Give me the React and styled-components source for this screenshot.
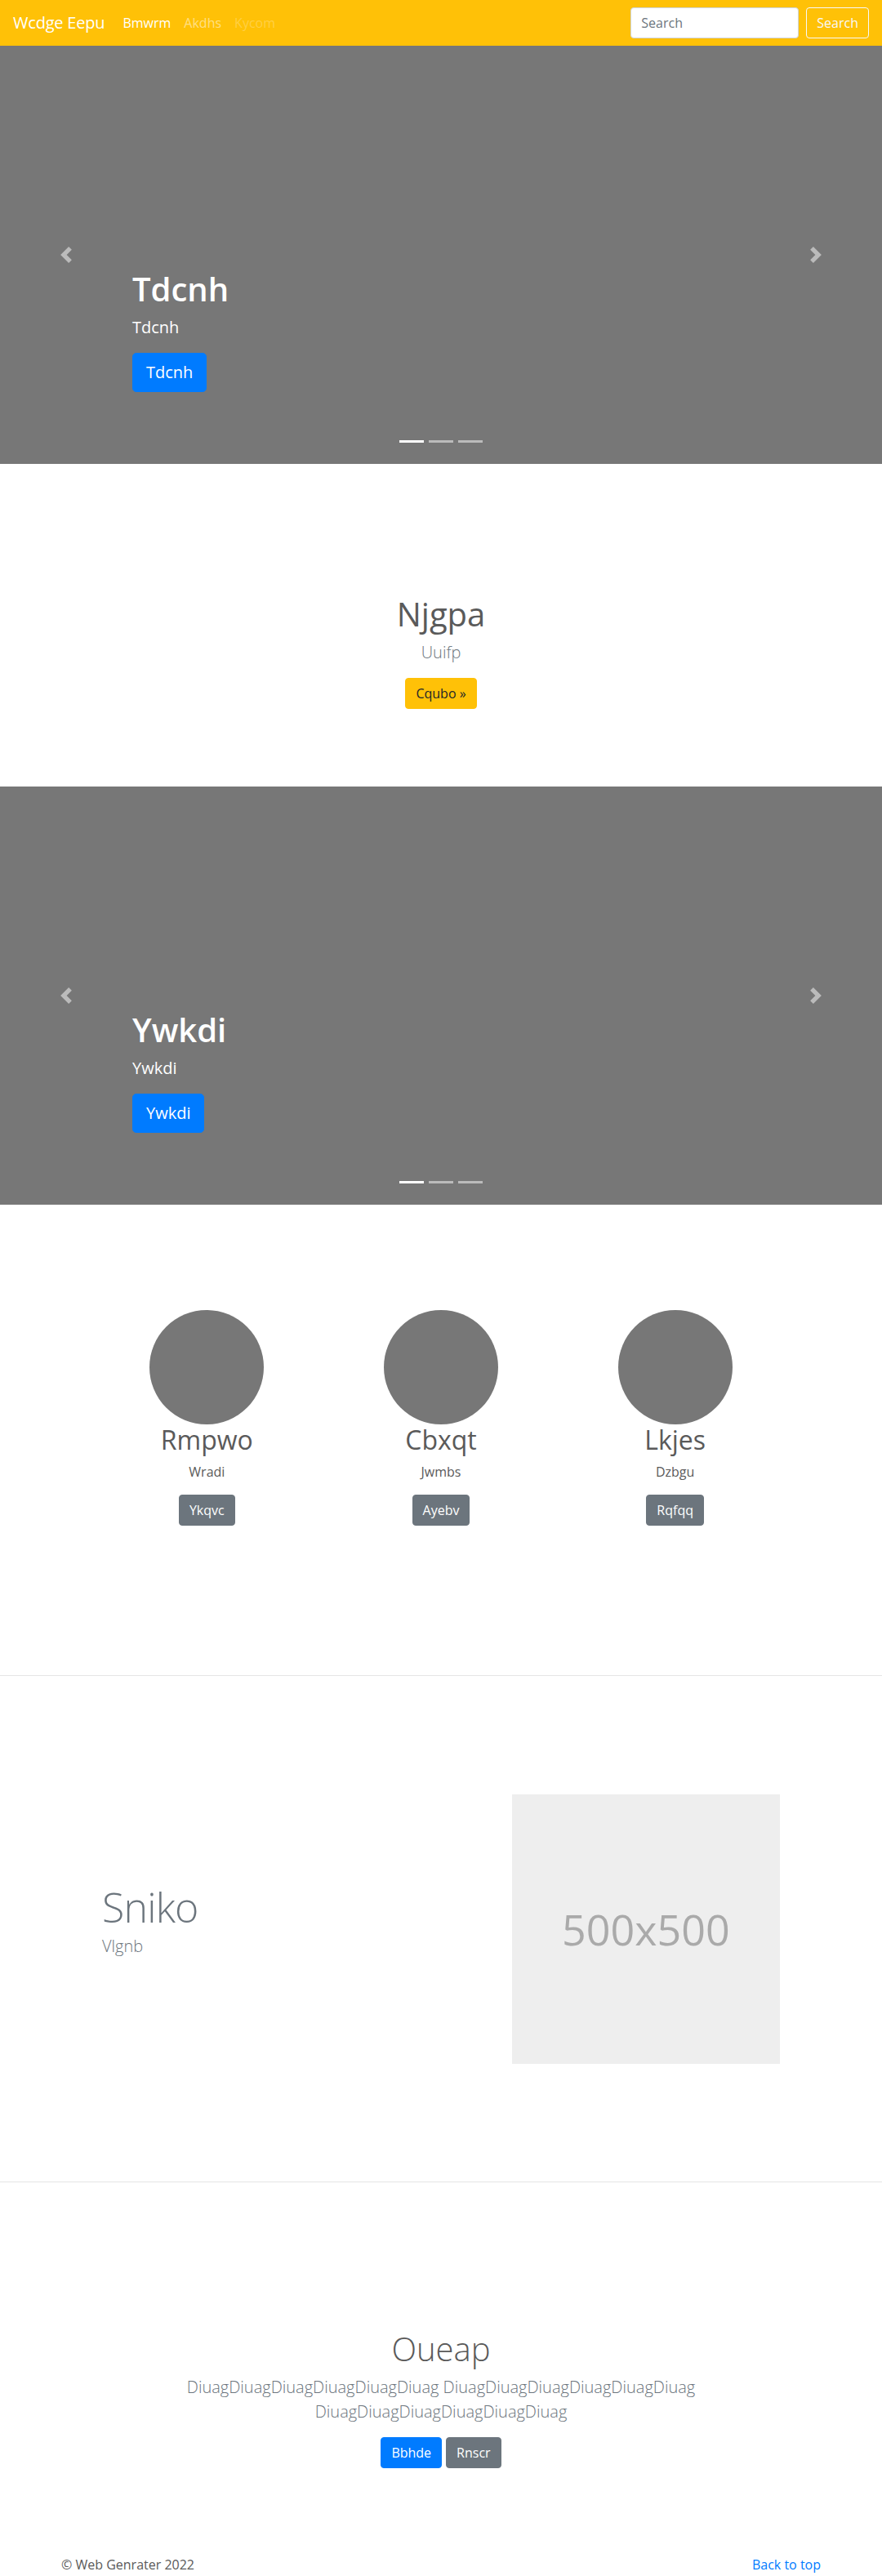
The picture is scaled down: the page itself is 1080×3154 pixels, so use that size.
import React from 'react';
import styled, { createGlobalStyle, css } from 'styled-components';

const GlobalStyle = createGlobalStyle`
  html, body {
    margin: 0;
    padding: 0;
    background: #fff;
  }
  body {
    font-family: "Open Sans", "Noto Sans", sans-serif;
    font-size: 16px;
    line-height: 1.5;
    color: #5a5a5a;
  }
  * {
    box-sizing: border-box;
  }
`;

const Navbar = styled.nav`
  display: flex;
  align-items: center;
  height: 56px;
  padding: 8px 16px;
  background-color: #ffc107;
`;

const Brand = styled.a`
  font-size: 20px;
  line-height: 30px;
  padding: 5px 0;
  margin-right: 14px;
  color: #fff;
  white-space: nowrap;
  letter-spacing: -0.2px;
`;

const NavLinks = styled.div`
  display: flex;
  flex: 1;
`;

const NavLink = styled.a`
  padding: 8px;
  color: ${(p) =>
    p.$state === 'active'
      ? '#fff'
      : p.$state === 'disabled'
      ? 'rgba(255, 255, 255, 0.25)'
      : 'rgba(255, 255, 255, 0.5)'};
`;

const SearchForm = styled.form`
  display: flex;
  align-items: center;
  gap: 9px;
`;

const SearchInput = styled.input`
  width: 206px;
  height: 38px;
  padding: 6px 12px;
  font-family: inherit;
  font-size: 16px;
  color: #495057;
  border: 1px solid #ced4da;
  border-radius: 4px;
  background: #fff;
  &::placeholder {
    color: #6c757d;
  }
`;

const OutlineButton = styled.button`
  height: 38px;
  padding: 6px 12px;
  font-family: inherit;
  font-size: 16px;
  line-height: 1.5;
  color: #f8f9fa;
  background: transparent;
  border: 1px solid #f8f9fa;
  border-radius: 4px;
`;

const variants = {
  primary: css`
    background-color: #007bff;
    border-color: #007bff;
    color: #fff;
  `,
  warning: css`
    background-color: #ffc107;
    border-color: #ffc107;
    color: #212529;
  `,
  secondary: css`
    background-color: #6c757d;
    border-color: #6c757d;
    color: #fff;
  `,
};

const Button = styled.a`
  display: inline-block;
  border: 1px solid transparent;
  line-height: 1.5;
  font-size: ${(p) => (p.$size === 'lg' ? '20px' : '16px')};
  padding: ${(p) => (p.$size === 'lg' ? '8px 16px' : '6px 12px')};
  border-radius: ${(p) => (p.$size === 'lg' ? '4.8px' : '4px')};
  ${(p) => variants[p.$variant || 'primary']}
`;

const CarouselFrame = styled.section`
  position: relative;
  height: 512px;
  background-color: #777;
  display: flex;
  flex-direction: column;
  justify-content: flex-end;
  align-items: flex-start;
  padding: 0 0 88px 15%;
`;

const CaptionTitle = styled.h1`
  margin: 0 0 8px;
  font-size: 40px;
  line-height: 1.2;
  font-weight: 600;
  color: #fff;
`;

const CaptionText = styled.p`
  margin: 0 0 16px;
  font-size: 20px;
  line-height: 30px;
  color: #fff;
`;

const Control = styled.span`
  position: absolute;
  top: 0;
  bottom: 0;
  ${(p) => (p.$side === 'left' ? 'left: 0;' : 'right: 0;')}
  width: 15%;
  display: flex;
  align-items: center;
  justify-content: center;
  opacity: 0.5;
`;

const Indicators = styled.ol`
  position: absolute;
  left: 0;
  right: 0;
  bottom: 26px;
  margin: 0;
  padding: 0;
  list-style: none;
  display: flex;
  justify-content: center;
  gap: 6px;
`;

const Indicator = styled.li`
  width: 30px;
  height: 3px;
  background-color: #fff;
  opacity: ${(p) => (p.$active ? 1 : 0.5)};
`;

const Intro = styled.section`
  padding: 160px 0 95px;
  text-align: center;
`;

const IntroTitle = styled.h1`
  margin: 0 0 8px;
  font-size: 40px;
  line-height: 1.2;
  font-weight: 500;
`;

const Lead = styled.p`
  margin: 0 0 16px;
  font-size: 20px;
  line-height: 30px;
  font-weight: 300;
  color: #6c757d;
`;

const Marketing = styled.section`
  width: 860px;
  margin: 0 auto;
  padding: 129px 0 183px;
  display: grid;
  grid-template-columns: repeat(3, 1fr);
`;

const Member = styled.div`
  display: flex;
  flex-direction: column;
  align-items: center;
  text-align: center;
`;

const Avatar = styled.div`
  width: 140px;
  height: 140px;
  border-radius: 50%;
  background-color: #777;
`;

const MemberName = styled.h2`
  margin: 0 0 8px;
  font-size: 32px;
  line-height: 1.2;
  font-weight: 400;
`;

const MemberText = styled.p`
  margin: 0 0 16px;
`;

const Divider = styled.hr`
  margin: 0;
  border: 0;
  border-top: 1px solid rgba(0, 0, 0, 0.1);
`;

const Featurette = styled.section`
  width: 860px;
  margin: 0 auto;
  padding: 145px 0 144px;
  display: grid;
  grid-template-columns: 7fr 5fr;
  align-items: center;
`;

const FeatureText = styled.div`
  padding: 0 15px;
`;

const FeatureHeading = styled.h2`
  margin: 0 0 8px;
  font-size: 50px;
  line-height: 1;
  font-weight: 300;
  letter-spacing: -0.8px;
  color: #6c757d;
`;

const Placeholder = styled.div`
  margin: 0 15px;
  height: 330px;
  background-color: #eee;
  color: #aaa;
  display: flex;
  align-items: center;
  justify-content: center;
  font-size: 52px;
`;

const Closing = styled.section`
  padding: 180px 0 0;
  text-align: center;
`;

const ClosingTitle = styled.h1`
  margin: 0 0 8px;
  font-size: 40px;
  line-height: 1.2;
  font-weight: 300;
`;

const ClosingLead = styled(Lead)`
  max-width: 720px;
  margin: 0 auto 16px;
`;

const ButtonRow = styled.div`
  display: flex;
  justify-content: center;
  gap: 5px;
  margin: 12px 0 24px;
`;

const Footer = styled.footer`
  width: 930px;
  margin: 0 auto;
  padding: 82px 0 0;
  display: flex;
  justify-content: space-between;
`;

const FooterLink = styled.a`
  color: #007bff;
`;

function PrevIcon({ flip }) {
  return (
    <svg width="20" height="20" viewBox="0 0 8 8" style={flip ? { transform: 'scaleX(-1)' } : undefined}>
      <path fill="#fff" d="M5.25 0l-4 4 4 4 1.5-1.5-2.5-2.5 2.5-2.5-1.5-1.5z" />
    </svg>
  );
}

function Carousel({ label }) {
  return (
    <CarouselFrame>
      <CaptionTitle>{label}</CaptionTitle>
      <CaptionText>{label}</CaptionText>
      <Button $variant="primary" $size="lg">{label}</Button>
      <Control $side="left"><PrevIcon /></Control>
      <Control $side="right"><PrevIcon flip /></Control>
      <Indicators>
        <Indicator $active />
        <Indicator />
        <Indicator />
      </Indicators>
    </CarouselFrame>
  );
}

const members = [
  { name: 'Rmpwo', text: 'Wradi', action: 'Ykqvc' },
  { name: 'Cbxqt', text: 'Jwmbs', action: 'Ayebv' },
  { name: 'Lkjes', text: 'Dzbgu', action: 'Rqfqq' },
];

const word = 'Diuag'.repeat(6);

export default function App() {
  return (
    <>
      <GlobalStyle />
      <Navbar>
        <Brand>Wcdge Eepu</Brand>
        <NavLinks>
          <NavLink $state="active">Bmwrm</NavLink>
          <NavLink>Akdhs</NavLink>
          <NavLink $state="disabled">Kycom</NavLink>
        </NavLinks>
        <SearchForm onSubmit={(e) => e.preventDefault()}>
          <SearchInput type="text" placeholder="Search" />
          <OutlineButton type="submit">Search</OutlineButton>
        </SearchForm>
      </Navbar>

      <Carousel label="Tdcnh" />

      <Intro>
        <IntroTitle>Njgpa</IntroTitle>
        <Lead>Uuifp</Lead>
        <Button $variant="warning">Cqubo »</Button>
      </Intro>

      <Carousel label="Ywkdi" />

      <Marketing>
        {members.map((m) => (
          <Member key={m.name}>
            <Avatar />
            <MemberName>{m.name}</MemberName>
            <MemberText>{m.text}</MemberText>
            <Button $variant="secondary">{m.action}</Button>
          </Member>
        ))}
      </Marketing>

      <Divider />

      <Featurette>
        <FeatureText>
          <FeatureHeading>Sniko</FeatureHeading>
          <Lead>Vlgnb</Lead>
        </FeatureText>
        <Placeholder>500x500</Placeholder>
      </Featurette>

      <Divider />

      <Closing>
        <ClosingTitle>Oueap</ClosingTitle>
        <ClosingLead>{word} {word} {word}</ClosingLead>
        <ButtonRow>
          <Button $variant="primary">Bbhde</Button>
          <Button $variant="secondary">Rnscr</Button>
        </ButtonRow>
      </Closing>

      <Footer>
        <span>© Web Genrater 2022</span>
        <FooterLink>Back to top</FooterLink>
      </Footer>
    </>
  );
}
